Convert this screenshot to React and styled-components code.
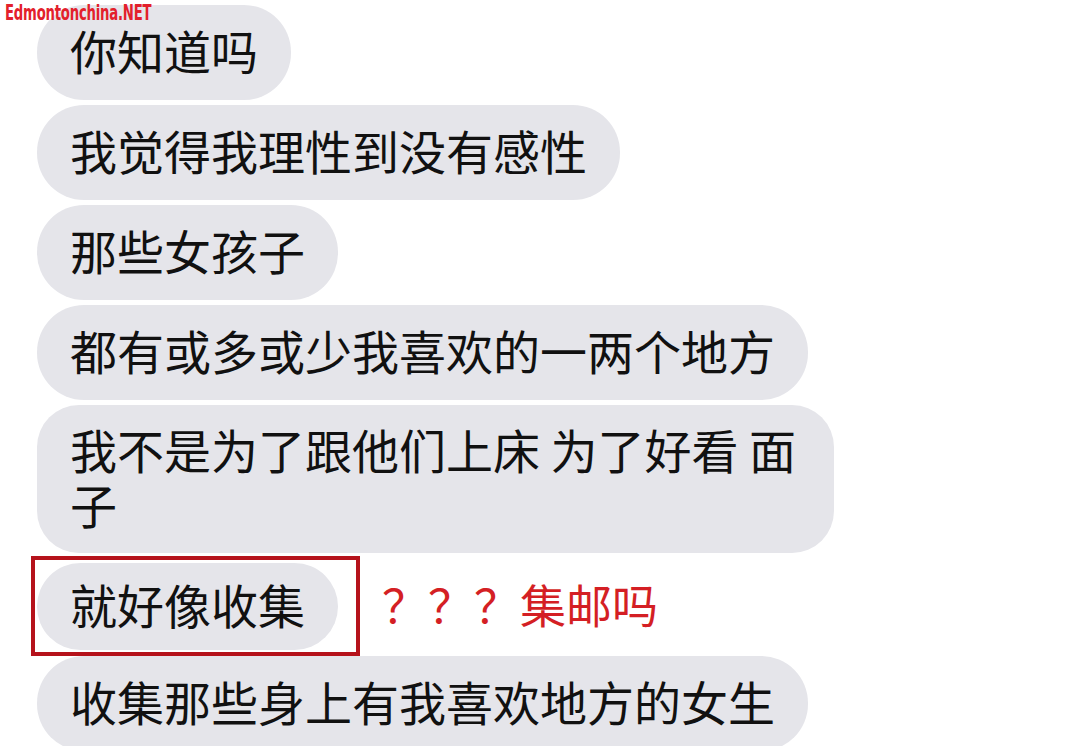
import React from 'react';
import styled, { createGlobalStyle } from 'styled-components';

const GlobalStyle = createGlobalStyle`
    html, body {
        margin: 0;
        padding: 0;
        background: #ffffff;
        overflow: hidden;
    }
`;

const Page = styled.div`
    position: relative;
    width: 1080px;
    height: 746px;
    overflow: hidden;
    background: #ffffff;
    font-family: "Noto Sans CJK SC", "Noto Sans", sans-serif;
`;

const Watermark = styled.div`
    position: absolute;
    left: 5px;
    top: 1px;
    font-family: "DejaVu Sans Condensed", "Liberation Sans", sans-serif;
    font-weight: bold;
    font-size: 21px;
    letter-spacing: -0.3px;
    color: #e3202b;
    transform: scaleX(0.7);
    transform-origin: left top;
    white-space: nowrap;
    z-index: 2;
`;

const Thread = styled.div`
    display: flex;
    flex-direction: column;
    align-items: flex-start;
    gap: 5px;
    padding: 5px 0 0 37px;
`;

const Bubble = styled.div`
    box-sizing: border-box;
    max-width: 800px;
    padding: ${p => (p.$tall ? '16px 38px 22px 33px' : '17px 33px 23px')};
    border-radius: ${p => (p.$tall ? '42px' : '47px')};
    background: #e5e5ea;
    color: #111111;
    font-size: 47px;
    line-height: 55px;
    white-space: nowrap;
`;

const MarkedRow = styled.div`
    display: flex;
    align-items: center;
    margin: -2px 0 -5px -6px;
`;

const RedFrame = styled.div`
    border: 4px solid #b5121b;
    padding: 3px 18px 2px 2px;

    ${Bubble} {
        padding-top: 13px;
        padding-bottom: 19px;
    }
`;

const Remark = styled.span`
    margin-left: 22px;
    padding-bottom: 6px;
    font-size: 46px;
    line-height: 55px;
    color: #d41f24;
`;

function App() {
    return (
        <Page>
            <GlobalStyle />
            <Watermark>Edmontonchina.NET</Watermark>
            <Thread>
                <Bubble>你知道吗</Bubble>
                <Bubble>我觉得我理性到没有感性</Bubble>
                <Bubble>那些女孩子</Bubble>
                <Bubble>都有或多或少我喜欢的一两个地方</Bubble>
                <Bubble $tall>
                    我不是为了跟他们上床 为了好看 面<br />子
                </Bubble>
                <MarkedRow>
                    <RedFrame>
                        <Bubble>就好像收集</Bubble>
                    </RedFrame>
                    <Remark>？？？集邮吗</Remark>
                </MarkedRow>
                <Bubble>收集那些身上有我喜欢地方的女生</Bubble>
            </Thread>
        </Page>
    );
}

export default App;
